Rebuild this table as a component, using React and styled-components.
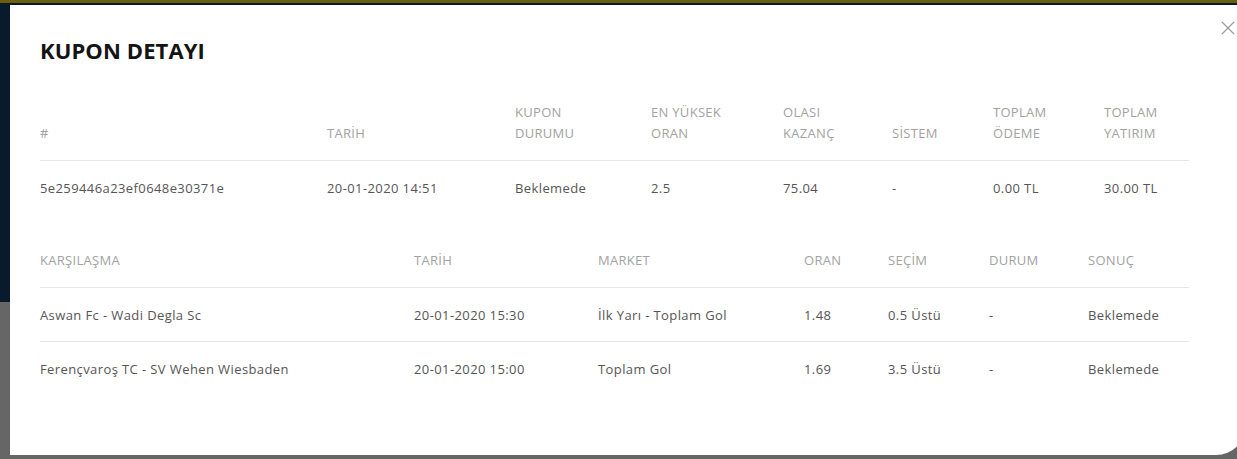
import styled, { createGlobalStyle } from "styled-components"

const GlobalStyle = createGlobalStyle`
    html, body {
        margin: 0;
        padding: 0;
        overflow: hidden;
    }
    body {
        font-family: "Open Sans", "Liberation Sans", sans-serif;
    }
`
const Backdrop = styled.div`
    width: 1237px;
    height: 459px;
    overflow: hidden;
    padding: 5px 0 0 10px;
    box-sizing: border-box;
    background: linear-gradient(to bottom, #6c5e0f 0 3px, #081a2b 3px 302px, #666666 302px);
`
const Modal = styled.div`
    position: relative;
    width: 1236px;
    height: 450px;
    box-sizing: border-box;
    background: #fff;
    border-radius: 0 0 30px 0;
    padding: 31px 0 0 30px;
`
const Close = styled.button`
    position: absolute;
    top: 16px;
    right: 11px;
    width: 14px;
    height: 14px;
    padding: 0;
    border: none;
    background: transparent;
    cursor: pointer;
    display: flex;
`
const Titel = styled.h2`
    margin: 0 0 22px;
    font-size: 22px;
    line-height: 28px;
    font-weight: 700;
    color: #141414;
    letter-spacing: 0.1px;
`
const Table = styled.table`
    width: 1149px;
    table-layout: fixed;
    border-collapse: collapse;
    margin-bottom: ${(prop) => prop.$gap || 0}px;
`
const Th = styled.th`
    text-align: left;
    vertical-align: bottom;
    font-weight: 400;
    font-size: 13px;
    line-height: 21px;
    letter-spacing: 0.3px;
    color: #a2a2a2;
    padding: 16px 0 16px;
    border-bottom: 1px solid #e6e6e6;
    text-transform: uppercase;
`
const Td = styled.td`
    font-size: 13px;
    letter-spacing: 0.4px;
    color: #555;
    height: 53px;
    padding: 0;
    vertical-align: middle;
    border-bottom: ${(prop) => prop.$line ? "1px solid #e6e6e6" : "none"};
`

const kuponCols = [
    { w: 287, h: "#" },
    { w: 188, h: "Tarİh" },
    { w: 136, h: <>Kupon<br />Durumu</> },
    { w: 132, h: <>En Yüksek<br />Oran</> },
    { w: 109, h: <>Olası<br />Kazanç</> },
    { w: 101, h: "Sİstem" },
    { w: 111, h: <>Toplam<br />Ödeme</> },
    { w: 85, h: <>Toplam<br />Yatırım</> },
]
const kuponRow = ["5e259446a23ef0648e30371e", "20-01-2020 14:51", "Beklemede", "2.5", "75.04", "-", "0.00 TL", "30.00 TL"]

const macCols = [
    { w: 374, h: "Karşılaşma" },
    { w: 184, h: "Tarİh" },
    { w: 206, h: "Market" },
    { w: 84, h: "Oran" },
    { w: 101, h: "Seçİm" },
    { w: 99, h: "Durum" },
    { w: 101, h: "Sonuç" },
]
const maclar = [
    ["Aswan Fc - Wadi Degla Sc", "20-01-2020 15:30", "İlk Yarı - Toplam Gol", "1.48", "0.5 Üstü", "-", "Beklemede"],
    ["Ferençvaroş TC - SV Wehen Wiesbaden", "20-01-2020 15:00", "Toplam Gol", "1.69", "3.5 Üstü", "-", "Beklemede"],
]

function DataTable({ cols, rows, gap, lastLine }) {
    return (
        <Table $gap={gap}>
            <colgroup>
                {cols.map((c, i) => <col key={i} style={{ width: c.w }} />)}
            </colgroup>
            <thead>
                <tr>
                    {cols.map((c, i) => <Th key={i}>{c.h}</Th>)}
                </tr>
            </thead>
            <tbody>
                {rows.map((r, i) => (
                    <tr key={i}>
                        {r.map((v, j) => <Td key={j} $line={lastLine || i < rows.length - 1}>{v}</Td>)}
                    </tr>
                ))}
            </tbody>
        </Table>
    )
}

function App() {
    return (
        <>
            <GlobalStyle />
            <Backdrop>
                <Modal>
                    <Close aria-label="Kapat">
                        <svg width="14" height="14" viewBox="0 0 14 14">
                            <path d="M1 1L13 13M13 1L1 13" stroke="#9a9a9a" strokeWidth="1.2" fill="none" />
                        </svg>
                    </Close>
                    <Titel>KUPON DETAYI</Titel>
                    <DataTable cols={kuponCols} rows={[kuponRow]} gap={20} />
                    <DataTable cols={macCols} rows={maclar} lastLine={false} />
                </Modal>
            </Backdrop>
        </>
    )
}

export default App
